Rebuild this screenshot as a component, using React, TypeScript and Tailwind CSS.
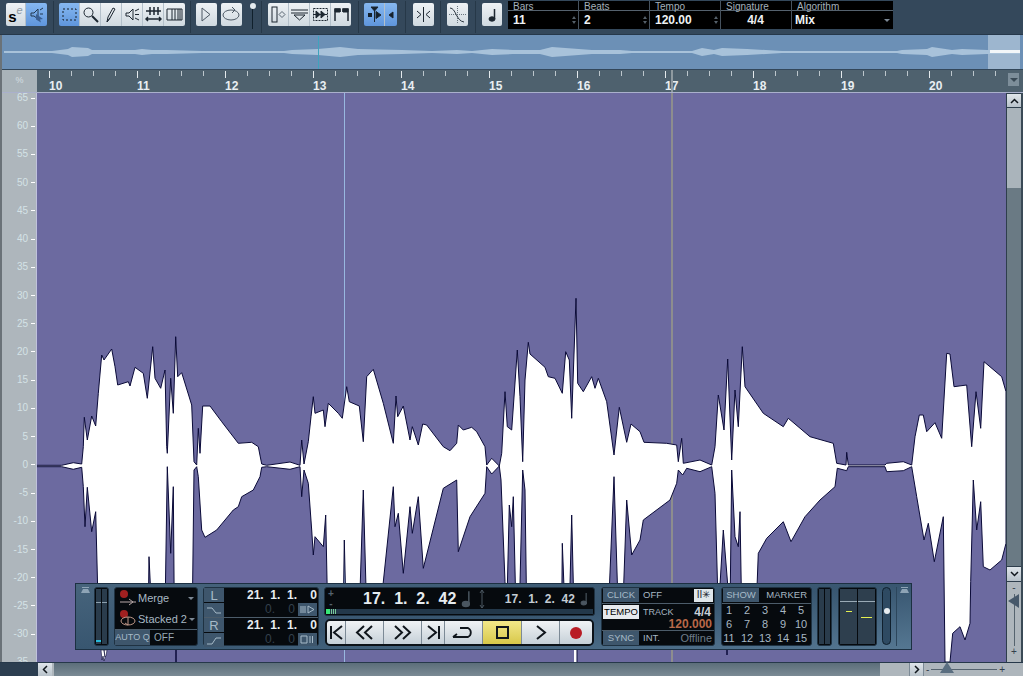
import type { ReactNode } from "react";

// ---- waveform outline, points read off the reference at 3x ----
type Pt = [number, number];
const fromLeft = (p: Pt[]) => p.map(([x, y]): Pt => [30 + x / 3, 280 + y / 3]);
const fromRight = (p: Pt[]) => p.map(([x, y]): Pt => [500 + x / 3, 280 + y / 3]);

const upper: Pt[] = [
  ...fromLeft([
    [20, 556], [95, 556], [130, 548], [155, 552], [160, 500], [163, 412], [172, 480], [185, 408], [197, 438], [205, 340],
    [215, 225], [222, 240], [245, 207], [255, 260], [263, 315], [295, 305], [300, 318], [315, 262], [340, 280], [352, 355],
    [368, 200], [375, 295], [392, 325], [405, 270], [410, 500], [412, 520], [422, 295], [430, 400], [437, 170], [443, 290],
    [455, 278], [485, 375], [492, 545], [500, 555], [505, 445], [510, 520], [518, 378], [540, 378], [575, 425], [625, 490],
    [665, 487], [685, 500], [695, 552], [710, 556], [780, 546], [810, 556], [815, 480], [822, 552], [835, 485], [843, 410],
    [850, 350], [855, 400], [880, 390], [885, 440], [895, 370], [925, 400], [937, 415], [950, 320], [958, 365], [988, 378],
    [1000, 485], [1010, 290], [1030, 268], [1060, 370], [1090, 490], [1098, 348], [1103, 410], [1120, 378], [1140, 480],
    [1147, 440], [1165, 495], [1178, 432], [1190, 435], [1240, 500], [1260, 512], [1280, 490], [1285, 435], [1300, 450],
    [1325, 442], [1340, 455], [1365, 500], [1370, 555], [1385, 535], [1408, 558], [1415, 520], [1425, 335], [1432, 440],
    [1445, 450], [1462, 210], [1470, 350], [1478, 545], [1485, 300], [1495, 187],
  ]),
  ...fromRight([
    [90, 222], [135, 262], [145, 290], [165, 295], [187, 340], [197, 215], [208, 240], [215, 415], [228, 55], [233, 310],
    [250, 335], [275, 290], [285, 325], [295, 295], [320, 365], [342, 525], [358, 382], [380, 487], [393, 432], [420, 455],
    [432, 487], [500, 490], [530, 495], [535, 545], [545, 475], [550, 550], [600, 540], [635, 555], [645, 500], [655, 345],
    [672, 450], [683, 237], [695, 540], [705, 330], [715, 440], [727, 200], [735, 320], [790, 400], [850, 440], [865, 415],
    [930, 470], [1000, 490], [1010, 550], [1038, 555], [1040, 517], [1045, 555], [1155, 555], [1160, 550], [1210, 545],
    [1235, 555], [1245, 470], [1258, 405], [1270, 405], [1280, 455], [1305, 428], [1325, 475], [1340, 220], [1350, 222],
    [1362, 320], [1400, 315], [1415, 500], [1428, 335], [1442, 445], [1452, 245], [1505, 290], [1518, 335],
  ]),
];

const lower: Pt[] = [
  ...fromLeft([
    [20, 560], [95, 560], [130, 568], [155, 562], [160, 620], [165, 740], [172, 622], [185, 755], [197, 695], [205, 1000],
    [355, 1000], [357, 830], [365, 1000], [405, 1000], [412, 560], [422, 820], [430, 620], [433, 1000], [487, 1000], [492, 570],
    [500, 560], [505, 590], [515, 750], [525, 772], [560, 750], [610, 690], [625, 680], [635, 650], [670, 630], [690, 590],
    [695, 562], [710, 560], [780, 568], [810, 560], [815, 650], [822, 570], [835, 610], [845, 750], [850, 825], [855, 770],
    [880, 800], [887, 705], [893, 1000], [940, 1000], [943, 780], [948, 1000], [988, 1000], [1000, 630], [1010, 1000], [1050, 1000],
    [1090, 620], [1095, 740], [1105, 700], [1120, 880], [1140, 680], [1147, 760], [1165, 650], [1180, 865], [1240, 625],
    [1280, 600], [1285, 815], [1320, 710], [1365, 640], [1370, 560], [1385, 582], [1408, 558],
  ]),
  ...fromRight([
    [3, 600], [15, 905], [20, 1000], [28, 675], [35, 740], [40, 650], [48, 1000], [58, 1000], [68, 570], [75, 630], [80, 1000],
    [185, 1000], [187, 790], [195, 1000], [208, 1000], [215, 705], [222, 1000], [325, 1000], [342, 590], [355, 1000], [368, 1000],
    [380, 660], [395, 825], [420, 780], [430, 720], [510, 660], [530, 610], [535, 570], [548, 585], [560, 565], [600, 575],
    [635, 560], [645, 640], [655, 1000], [670, 750], [690, 1000], [695, 570], [705, 770], [715, 800], [720, 695], [725, 1000],
    [768, 1000], [775, 820], [800, 775], [850, 725], [873, 785], [915, 710], [960, 660], [1005, 620], [1012, 565], [1040, 572],
    [1045, 560], [1155, 560], [1160, 575], [1210, 572], [1235, 560], [1250, 650], [1272, 780], [1285, 730], [1303, 845],
    [1330, 710], [1335, 1146], [1350, 1146], [1358, 1060], [1380, 1040], [1395, 1080], [1410, 1030], [1412, 905], [1420, 600],
    [1430, 750], [1442, 665], [1450, 860], [1470, 870], [1505, 840], [1518, 790],
  ]),
];

const wavePoints = [...upper, ...lower.slice().reverse()].map(([x, y]) => `${x.toFixed(1)},${y.toFixed(1)}`).join(" ");

// overview strip: x + half height of the band, mirrored about y=17
const overview: Pt[] = [
  [2, 1], [50, 1], [66, 3], [70, 5], [86, 4], [90, 2], [133, 2], [140, 3], [150, 2], [165, 2], [200, 1], [282, 1], [290, 2], [316, 3],
  [338, 5], [356, 3], [400, 2], [430, 1], [455, 2], [470, 1], [490, 3], [511, 2], [538, 2], [550, 5], [590, 2], [618, 2], [630, 1],
  [690, 1], [700, 4], [712, 2], [720, 4], [745, 3], [780, 1], [895, 1], [900, 2], [925, 3], [930, 5], [950, 2], [960, 3], [985, 2], [1018, 2],
];
const overviewPoints = [...overview.map(([x, h]) => `${x},${17 - h}`), ...overview.slice().reverse().map(([x, h]) => `${x},${17 + h}`)].join(" ");

const axisLabels = ["65", "60", "55", "50", "45", "40", "35", "30", "25", "20", "15", "10", "5", "0", "-5", "-10", "-15", "-20", "-25", "-30", "-35"];
const bars = [10, 11, 12, 13, 14, 15, 16, 17, 18, 19, 20];

// ---- toolbar ----
function Tool({ on, w = 21, children }: { on?: boolean; w?: number; children: ReactNode }) {
  return (
    <div
      style={{ width: w }}
      className={`h-[23px] flex items-center justify-center border-r border-[#b4c0ca] last:border-r-0 ${
        on ? "bg-gradient-to-b from-[#86b8f0] to-[#5f95dc]" : "bg-gradient-to-b from-[#eef2f5] to-[#d0d9e0]"
      }`}
    >
      {children}
    </div>
  );
}

function Ico({ children, w = 17, h = 17 }: { children: ReactNode; w?: number; h?: number }) {
  return (
    <svg width={w} height={h} viewBox={`0 0 ${w} ${h}`} fill="none" stroke="#1c2630" strokeWidth="1">
      {children}
    </svg>
  );
}

const Sep = ({ ml, mr }: { ml: string; mr: string }) => <div className={`${ml} ${mr} w-px h-[32px] mt-[1px] bg-[#263848]`} />;

function Spinner() {
  return (
    <div className="flex flex-col gap-[2px] items-center mr-[1px]">
      <div className="w-0 h-0 border-x-[2.5px] border-x-transparent border-b-[3px] border-b-[#55606a]" />
      <div className="w-0 h-0 border-x-[2.5px] border-x-transparent border-t-[3px] border-t-[#55606a]" />
    </div>
  );
}

function InfoCell({ label, value, w, spin, center }: { label: string; value: string; w: string; spin?: boolean; center?: boolean }) {
  return (
    <div className={`${w} flex flex-col border-r border-[#46525e] last:border-r-0`}>
      <div className="h-[10px] border-b border-[#55626e] pl-[5px] text-[10px] leading-[11px] text-[#a4b0ba]">{label}</div>
      <div className="flex-1 flex items-center justify-between pl-[5px] pr-[1px]">
        <span className={`text-[12px] font-bold text-[#eef2f4] ${center ? "w-full text-center pr-[5px]" : ""}`}>{value}</span>
        {spin && <Spinner />}
      </div>
    </div>
  );
}

function TopBar() {
  return (
    <div className="h-[35px] flex items-start bg-[#34485b] border-b border-[#26384a] pl-[6px]">
      <div className="flex mt-[3px] rounded-[2px] overflow-hidden">
        <Tool w={20}>
          <span className="text-[15px] font-bold text-black leading-none mt-[3px]">s</span>
          <span className="text-[11px] italic text-[#8d9aa6] leading-none -mt-[9px]">e</span>
        </Tool>
        <Tool on>
          <Ico>
            <path d="M3 7h3l4-4v9M3 7v3h3l4 3M12 4l3-2M12 8h3" stroke="#22384f" />
            <path d="M8 8l7 5-3 .5 1 3-5-3z" fill="#3a5f92" stroke="none" />
          </Ico>
        </Tool>
      </div>
      <Sep ml="ml-[6px]" mr="mr-[5px]" />
      <div className="flex mt-[3px] rounded-[2px] overflow-hidden">
        <Tool on>
          <Ico><rect x="2" y="3" width="13" height="11" strokeDasharray="2 2" stroke="#16202a" /></Ico>
        </Tool>
        <Tool>
          <Ico>
            <circle cx="6.5" cy="6.5" r="4.5" />
            <path d="M10 10l6 6" strokeWidth="2" />
          </Ico>
        </Tool>
        <Tool>
          <Ico><path d="M4 16l1-5 5-9 2 1-5 9zM4 16l3-4" /></Ico>
        </Tool>
        <Tool>
          <Ico><path d="M2 7h3l4-4v11l-4-4H2zM11 5l4-2M11 8.500h4M11 12l4 2" /></Ico>
        </Tool>
        <Tool>
          <Ico>
            <path d="M5 1v8M9 1v8M13 1v8M1 5h15" strokeWidth="1.500" />
            <path d="M1 13h15M3 11l-2 2 2 2M14 11l2 2-2 2" strokeWidth="1.500" />
          </Ico>
        </Tool>
        <Tool>
          <Ico><path d="M1 3h15v11H1zM6 3v11M9 3v11M12 3v11M14 3v11" /></Ico>
        </Tool>
      </div>
      <Sep ml="ml-[5px]" mr="mr-[5px]" />
      <div className="mt-[3px] rounded-[2px] overflow-hidden flex">
        <Tool>
          <Ico><path d="M4 2l8 6.500-8 6.500z" stroke="#4c5864" /></Ico>
        </Tool>
      </div>
      <div className="mt-[3px] ml-[4px] rounded-[2px] overflow-hidden flex">
        <Tool>
          <Ico w={19}>
            <ellipse cx="9" cy="9" rx="8" ry="5" stroke="#4c5864" />
            <path d="M10 1l3 3-3 3" stroke="#4c5864" />
          </Ico>
        </Tool>
      </div>
      <div className="ml-[6px] mt-[3px] w-[9px] flex flex-col items-center">
        <div className="w-[6px] h-[6px] rounded-full bg-[#e6ecf0]" />
        <div className="w-px h-[20px] bg-[#10202c]" />
      </div>
      <Sep ml="ml-[4px]" mr="mr-[6px]" />
      <div className="flex mt-[3px] rounded-[2px] overflow-hidden">
        <Tool>
          <Ico>
            <rect x="2" y="1" width="5" height="15" />
            <path d="M9 8.500l3-3 3 3-3 3z" stroke="#5a6672" />
          </Ico>
        </Tool>
        <Tool>
          <Ico w={19}>
            <path d="M1 4h17M1 7h17" />
            <path d="M4 9h11l-5.500 5z" />
          </Ico>
        </Tool>
        <Tool>
          <Ico>
            <rect x="1.500" y="2.500" width="14" height="12" strokeDasharray="2 1" />
            <path d="M4 5v7l4-3.500zM9 5v7l4-3.500zM2 8.500h13" fill="#1c2630" />
          </Ico>
        </Tool>
        <Tool w={20}>
          <Ico><path d="M2 15V3h5v3M15 15V3h-5v3" strokeWidth="1.500" /><path d="M2 3h5v3H2zM10 3h5v3h-5z" fill="#1c2630" /></Ico>
        </Tool>
      </div>
      <Sep ml="ml-[7px]" mr="mr-[5px]" />
      <div className="flex mt-[3px] rounded-[2px] overflow-hidden">
        <Tool on>
          <Ico>
            <path d="M5 1h7L8.500 5zM8.500 4v12" fill="#14202c" />
            <rect x="2" y="7" width="4" height="4" fill="#14202c" stroke="none" />
            <path d="M10 5.500l5 3.500-5 3.500z" fill="#14202c" />
          </Ico>
        </Tool>
        <Tool on w={12}>
          <Ico w={8}><path d="M6 6v6L2 9z" fill="#14202c" /></Ico>
        </Tool>
      </div>
      <Sep ml="ml-[8px]" mr="mr-[7px]" />
      <div className="flex mt-[3px] rounded-[2px] overflow-hidden">
        <Tool>
          <Ico><path d="M8.500 1v15M2 5l4 3.500L2 12M15 5l-4 3.500 4 3.500" /></Ico>
        </Tool>
      </div>
      <Sep ml="ml-[6px]" mr="mr-[6px]" />
      <div className="flex mt-[3px] rounded-[2px] overflow-hidden">
        <Tool>
          <Ico w={19} h={19}>
            <path d="M1 9.500h17" strokeDasharray="1 1" stroke="#68747e" />
            <path d="M9.500 1v17" strokeDasharray="1 1" stroke="#68747e" />
            <path d="M2 3c6 0 6 13 14 14" stroke="#2a343e" />
          </Ico>
        </Tool>
      </div>
      <Sep ml="ml-[7px]" mr="mr-[6px]" />
      <div className="flex mt-[3px] rounded-[2px] overflow-hidden">
        <Tool w={20}>
          <Ico>
            <path d="M10.500 3v10" strokeWidth="1.500" />
            <ellipse cx="8" cy="13" rx="3" ry="2.200" fill="#1c2630" />
          </Ico>
        </Tool>
      </div>
      <div className="ml-[6px] mt-[1px] w-[385px] h-[28px] bg-black flex font-['Liberation_Sans',sans-serif]">
        <InfoCell label="Bars" value="11" w="w-[71px]" spin />
        <InfoCell label="Beats" value="2" w="w-[71px]" spin />
        <InfoCell label="Tempo" value="120.00" w="w-[71px]" spin />
        <InfoCell label="Signature" value="4/4" w="w-[71px]" center />
        <div className="flex-1 flex flex-col">
          <div className="h-[10px] border-b border-[#55626e] pl-[5px] text-[10px] leading-[11px] text-[#a4b0ba]">Algorithm</div>
          <div className="flex-1 flex items-center justify-between pl-[3px] pr-[3px]">
            <span className="text-[12px] font-bold text-[#eef2f4]">Mix</span>
            <div className="w-0 h-0 border-x-[3px] border-x-transparent border-t-[3px] border-t-[#7c8894]" />
          </div>
        </div>
      </div>
    </div>
  );
}

function Overview() {
  return (
    <div className="relative ml-[2px] h-[35px] bg-[#6c90b6] border-b border-[#33475a]">
      <div className="absolute right-[3px] top-0 bottom-0 w-[32px] bg-[#9db6cf]" />
      <svg className="absolute inset-0" width="1021" height="35" viewBox="0 0 1021 35">
        <polygon points={overviewPoints} fill="#a8c2da" />
        <path d="M988 15h30v3h-30z" fill="#f2f6f9" />
        <path d="M316.500 1v33" stroke="#3fa3bd" />
      </svg>
    </div>
  );
}

function Ruler() {
  return (
    <div className="relative h-[23px] flex font-['Liberation_Sans',sans-serif] bg-[#4e616e] ml-[2px] overflow-hidden border-b border-[#aab0cc]">
      <div className="w-[35px] shrink-0 bg-[#a9b3b9] flex items-center justify-center text-[9px] text-[#d4dee2]">%</div>
      <div className="flex pl-[12px]">
        {bars.map((b) => (
          <div key={b} className="w-[88px] shrink-0 flex flex-col">
            <div className="flex h-[9px] mt-[1px] items-start">
              <div className="w-[22px] h-[7px] border-l border-[#e4e9ec]" />
              <div className="w-[22px] h-[5px] border-l border-[#bcc6cc]" />
              <div className="w-[22px] h-[5px] border-l border-[#bcc6cc]" />
              <div className="w-[22px] h-[5px] border-l border-[#bcc6cc]" />
            </div>
            <div className="text-[12px] leading-[12px] font-bold text-[#e8eef2]">{b}</div>
          </div>
        ))}
      </div>
      <div className="absolute left-[669px] top-0 bottom-0 w-[2px] bg-[#8f9aa0]" />
      <div className="absolute right-[4px] top-[3px] w-[11px] h-[13px] bg-[#7d8e9a] flex items-center justify-center">
        <div className="w-0 h-0 border-x-[4px] border-x-transparent border-t-[4px] border-t-[#3a4a56]" />
      </div>
    </div>
  );
}

function Axis() {
  return (
    <div className="w-[35px] ml-[2px] shrink-0 bg-[#aeb6bc] border-r border-[#c0c2dc] overflow-hidden flex flex-col gap-[18.23px] font-['Liberation_Sans',sans-serif]">
      {axisLabels.map((l) => (
        <div key={l} className="h-[10px] shrink-0 flex items-center justify-end text-[10px] leading-[10px] text-[#d4e2e6]">
          <span>{l}</span>
          <div className="w-[4px] h-px bg-white ml-[3px] mr-[1px]" />
        </div>
      ))}
    </div>
  );
}

// ---- transport panel ----
const panelBlock = "bg-[#060a0e] rounded-[3px] border border-[#1f3242]";

function MiniCurve({ d }: { d: string }) {
  return (
    <div className="w-[20px] h-[14px] bg-[#3e566c] flex items-center justify-center">
      <svg width="16" height="11" viewBox="0 0 16 11" fill="none" stroke="#a6bac8" strokeWidth="1">
        <path d={d} />
      </svg>
    </div>
  );
}

function LocatorRow({ letter, curve, icon }: { letter: string; curve: string; icon: ReactNode }) {
  return (
    <div className="flex h-[29px]">
      <div className="flex flex-col gap-[1px]">
        <div className="w-[20px] h-[14px] bg-[#3e566c] flex items-center justify-center text-[13px] leading-none text-[#a6bac8]">{letter}</div>
        <MiniCurve d={curve} />
      </div>
      <div className="flex-1 flex flex-col items-end pr-[1px]">
        <div className="text-[12px] leading-[14px] font-bold text-[#e6ecf0] whitespace-pre">21.  1.  1.    0</div>
        <div className="flex items-center gap-[1px]">
          <div className="text-[12px] leading-[14px] text-[#33404c] whitespace-pre">0.    0</div>
          <div className="w-[19px] h-[13px] ml-[2px] bg-[#3e566c] flex items-center justify-center">{icon}</div>
        </div>
      </div>
    </div>
  );
}

function Note({ s = 14 }: { s?: number }) {
  return (
    <svg width={s * 0.7} height={s * 1.3} viewBox="0 0 10 18" fill="none" stroke="#4a5660" strokeWidth="1.500">
      <path d="M8 1v13" />
      <ellipse cx="5" cy="14" rx="3.500" ry="2.500" fill="#4a5660" />
    </svg>
  );
}

function Transport({ w, on, children }: { w: number; on?: boolean; children: ReactNode }) {
  return (
    <div
      style={{ width: w }}
      className={`h-full flex items-center justify-center border-r border-[#7c8a96] last:border-r-0 ${
        on ? "bg-gradient-to-b from-[#f2e888] to-[#d8c848]" : "bg-gradient-to-b from-[#f0f3f5] to-[#c6d0d8]"
      }`}
    >
      {children}
    </div>
  );
}

function TransportPanel() {
  return (
    <div className="absolute left-[38px] top-[490px] w-[837px] h-[67px] flex border border-[#1c3042] bg-gradient-to-br from-[#47647c] via-[#385670] to-[#557792] font-['Liberation_Sans',sans-serif]">
      <div className="w-[18px] flex flex-col items-center pt-[3px]">
        <svg width="9" height="7" viewBox="0 0 9 7" fill="#8ea4b6"><path d="M1 0h7v1H1zM2 2h5l2 4H0z" /></svg>
      </div>
      {/* output meter */}
      <div className={`${panelBlock} w-[15px] h-[59px] mt-[3px] flex gap-[1px] px-[1px] py-[1px]`}>
        <div className="flex-1 bg-[#2a3c4c] flex flex-col justify-end relative">
          <div className="absolute left-0 right-0 top-[13px] h-px bg-[#8da0ae]" />
          <div className="h-[2px] bg-[#28b8d8] mb-[2px]" />
        </div>
        <div className="flex-1 bg-[#2a3c4c] relative">
          <div className="absolute left-0 right-0 top-[13px] h-px bg-[#8da0ae]" />
        </div>
      </div>
      {/* record mode */}
      <div className={`${panelBlock} ml-[5px] w-[84px] h-[59px] mt-[3px] flex flex-col`}>
        <div className="h-[21px] flex items-center pl-[2px]">
          <svg width="22" height="20" viewBox="0 0 22 20" fill="none">
            <circle cx="7" cy="5" r="4" fill="#a02020" />
            <path d="M3 13h16M12 10l4 3-4 3" stroke="#b8a8a8" />
          </svg>
          <span className="-ml-[1px] text-[11px] text-[#a8b8c4]">Merge</span>
          <div className="ml-auto mr-[3px] w-0 h-0 border-x-[3px] border-x-transparent border-t-[3px] border-t-[#7c8894]" />
        </div>
        <div className="h-[20px] flex items-center pl-[2px]">
          <svg width="22" height="20" viewBox="0 0 22 20" fill="none">
            <circle cx="7" cy="5" r="4" fill="#a02020" />
            <ellipse cx="11" cy="12" rx="7" ry="4" stroke="#c09888" />
            <path d="M11 8v8M8 14l3 2" stroke="#c09888" />
          </svg>
          <span className="-ml-[1px] text-[11px] text-[#a8b8c4] whitespace-nowrap">Stacked 2</span>
          <div className="ml-auto mr-[2px] w-0 h-0 border-x-[3px] border-x-transparent border-t-[3px] border-t-[#7c8894]" />
        </div>
        <div className="h-px bg-[#4c5c6a]" />
        <div className="flex-1 flex items-center">
          <div className="w-[35px] h-full bg-[#3e566c] flex items-center justify-center whitespace-nowrap text-[9px] text-[#a6bac8]">AUTO Q</div>
          <span className="ml-[4px] text-[10px] text-[#98a8b4]">OFF</span>
        </div>
      </div>
      {/* locators */}
      <div className={`${panelBlock} ml-[5px] w-[116px] h-[59px] mt-[3px]`}>
        <LocatorRow
          letter="L"
          curve="M1 3h5l4 5h5"
          icon={<svg width="15" height="9" viewBox="0 0 15 9" fill="none" stroke="#a6bac8"><path d="M1 1v7M3 1v7M5 1v7M8 1l6 3.500L8 8z" /></svg>}
        />
        <div className="h-px bg-[#4c5c6a]" />
        <LocatorRow
          letter="R"
          curve="M1 9h5l4-6h5"
          icon={<svg width="15" height="9" viewBox="0 0 15 9" fill="none" stroke="#a6bac8"><path d="M1 1h6v7H1zM10 1v7M12.500 1v7" /></svg>}
        />
      </div>
      {/* time display + transport */}
      <div className="ml-[5px] w-[271px] h-[59px] mt-[3px] flex flex-col gap-[3px]">
        <div className={`${panelBlock} h-[30px] flex flex-col`}>
          <div className="flex-1 flex items-center pl-[1px]">
            <div className="w-[10px] flex flex-col items-center text-[#55636e] text-[10px] leading-[10px] font-bold">
              <span>+</span>
              <span>-</span>
            </div>
            <span className="ml-[27px] w-[97px] text-[16px] font-bold text-[#e6ecf0] whitespace-pre leading-none">17.  1.  2.  42</span>
            <div className="ml-[1px]"><Note s={14} /></div>
            <svg className="ml-[8px]" width="6" height="20" viewBox="0 0 6 20" fill="none" stroke="#4a5660"><path d="M3 1v18M1 4l2-3 2 3M1 16l2 3 2-3" /></svg>
            <span className="ml-[20px] w-[75px] text-[12px] font-bold text-[#c4ccd4] whitespace-pre leading-none">17.  1.  2.  42</span>
            <Note s={11} />
          </div>
          <div className="h-[5px] mx-[1px] mb-[1px] bg-[#23384a] flex gap-[1px]">
            <div className="w-[4px] bg-[#38e878]" />
            <div className="w-[1px] bg-[#78c898]" />
            <div className="w-[1px] bg-[#78c898]" />
            <div className="w-[1px] bg-[#78c898]" />
          </div>
        </div>
        <div className="h-[27px] ml-[1px] w-[269px] flex border-2 border-[#0c1218] rounded-[5px] overflow-hidden">
          <Transport w={19}>
            <svg width="15" height="15" viewBox="0 0 15 15" fill="none" stroke="#10161c" strokeWidth="2"><path d="M2 1v13M13 1L5 7.500 13 14" /></svg>
          </Transport>
          <Transport w={38}>
            <svg width="19" height="15" viewBox="0 0 19 15" fill="none" stroke="#10161c" strokeWidth="2"><path d="M9 1L2 7.500 9 14M17 1l-7 6.500 7 6.500" /></svg>
          </Transport>
          <Transport w={38}>
            <svg width="19" height="15" viewBox="0 0 19 15" fill="none" stroke="#10161c" strokeWidth="2"><path d="M2 1l7 6.500L2 14M10 1l7 6.500L10 14" /></svg>
          </Transport>
          <Transport w={23}>
            <svg width="15" height="15" viewBox="0 0 15 15" fill="none" stroke="#10161c" strokeWidth="2"><path d="M13 1v13M2 1l8 6.500L2 14" /></svg>
          </Transport>
          <Transport w={38}>
            <svg width="23" height="13" viewBox="0 0 23 13" fill="none" stroke="#10161c" strokeWidth="1.800"><path d="M1 11h15a5 5 0 0 0 0-9H8M5 8l-4 3" /></svg>
          </Transport>
          <Transport w={39} on>
            <div className="w-[13px] h-[13px] border-2 border-[#10161c]" />
          </Transport>
          <Transport w={38}>
            <svg width="12" height="15" viewBox="0 0 12 15" fill="none" stroke="#10161c" strokeWidth="2"><path d="M2 1l8 6.500L2 14" /></svg>
          </Transport>
          <Transport w={32}>
            <div className="w-[12px] h-[12px] rounded-full bg-[#b81c24]" />
          </Transport>
        </div>
      </div>
      {/* click / tempo / sync */}
      <div className={`${panelBlock} ml-[6px] w-[114px] h-[59px] mt-[3px] flex flex-col text-[9.5px] leading-none`}>
        <div className="h-[14px] flex items-center">
          <div className="w-[36px] h-full ml-[1px] bg-[#3e566c] flex items-center justify-center text-[#a6bac8]">CLICK</div>
          <span className="ml-[4px] text-[#a8b8c4]">OFF</span>
          <div className="ml-auto mr-[1px] h-[13px] w-[19px] bg-[#dfe6ea] flex items-center justify-center text-[10px] text-[#1c2630]">II✳</div>
        </div>
        <div className="h-px bg-[#4c5c6a] mt-[1px]" />
        <div className="flex-1 flex flex-col pt-[1px]">
          <div className="flex items-center h-[14px]">
            <div className="w-[36px] h-full ml-[1px] bg-[#e6eaee] flex items-center justify-center text-black">TEMPO</div>
            <span className="ml-[4px] text-[9px] text-[#a8b8c4]">TRACK</span>
            <span className="ml-auto mr-[3px] text-[12px] font-bold text-[#c6d0d8]">4/4</span>
          </div>
          <div className="self-end mr-[2px] -mt-[1px] text-[12px] font-bold text-[#b86848]">120.000</div>
        </div>
        <div className="h-px bg-[#4c5c6a]" />
        <div className="h-[14px] flex items-center">
          <div className="w-[36px] h-full ml-[1px] bg-[#3e566c] flex items-center justify-center text-[#a6bac8]">SYNC</div>
          <span className="ml-[4px] text-[#a8b8c4]">INT.</span>
          <span className="ml-auto mr-[2px] text-[11px] text-[#6e7c88]">Offline</span>
        </div>
      </div>
      {/* markers */}
      <div className={`${panelBlock} ml-[6px] w-[91px] h-[59px] mt-[3px] flex flex-col`}>
        <div className="h-[14px] flex items-center text-[9.5px] leading-none">
          <div className="w-[36px] h-full ml-[1px] bg-[#3e566c] flex items-center justify-center text-[#a6bac8]">SHOW</div>
          <span className="ml-auto mr-[4px] text-[#a8b8c4]">MARKER</span>
        </div>
        <div className="h-px bg-[#4c5c6a] mt-[1px]" />
        <div className="flex-1 grid grid-cols-[repeat(5,18px)] -ml-[2px] items-center justify-items-center text-[11px] leading-none text-[#a8b8c4]">
          {Array.from({ length: 15 }, (_, i) => (
            <span key={i}>{i + 1}</span>
          ))}
        </div>
      </div>
      {/* master meters */}
      <div className={`${panelBlock} ml-[5px] w-[15px] h-[59px] mt-[3px] flex gap-[1px] p-[1px]`}>
        <div className="flex-1 bg-[#2a3c4c]" />
        <div className="flex-1 bg-[#2a3c4c]" />
      </div>
      <div className={`${panelBlock} ml-[6px] w-[39px] h-[59px] mt-[3px] flex gap-[1px] p-[1px]`}>
        {[9, 15].map((t, i) => (
          <div key={t} className="flex-1 flex flex-col">
            <div className="h-[13px] bg-[#2e3f4e] border-b border-[#9aaab6]" />
            <div className="flex-1 bg-[#2e3f4e] flex justify-center">
              <div style={{ marginTop: t }} className={`h-px bg-[#e4f050] ${i === 0 ? "w-[6px]" : "w-[11px]"}`} />
            </div>
          </div>
        ))}
      </div>
      <div className="ml-[5px] w-[9px] h-[58px] mt-[3px] rounded-full border border-[#10202e] bg-[#2e4a62] flex justify-center pt-[20px]">
        <div className="w-[6px] h-[6px] rounded-full bg-[#e6ecf0]" />
      </div>
      <div className="ml-[5px] w-px h-[59px] mt-[3px] bg-[#2c465c]" />
      <div className="flex-1 flex justify-center pt-[3px]">
        <svg width="9" height="7" viewBox="0 0 9 7" fill="#8ea4b6"><path d="M1 0h7v1H1zM2 2h5l2 4H0z" /></svg>
      </div>
    </div>
  );
}

function Canvas() {
  return (
    <div className="relative flex-1 bg-[#6c6aa0] overflow-hidden">
      <svg className="absolute inset-0" width="969" height="569" viewBox="37 93 969 569">
        <path d="M344.500 93v569" stroke="#98b8e0" />
        <path d="M672 93v569" stroke="#989a88" strokeWidth="1.500" />
        <polygon points={wavePoints} fill="#ffffff" stroke="#0a0a38" strokeWidth="1" strokeLinejoin="miter" />
        <path d="M101 650h3l1 8-1 3-1-5-1 4zM104 650h3l-1 6-1 1z" fill="#fff" stroke="#0a0a38" strokeWidth=".6" />
        <path d="M176 650v12" stroke="#0a0a38" strokeWidth="1.500" />
        <path d="M574 650h3v12h-3z" fill="#fff" />
        <path d="M577 650v12" stroke="#0a0a38" />
        <path d="M727 650v5" stroke="#0a0a38" strokeWidth="1.500" />
      </svg>
      <TransportPanel />
    </div>
  );
}

function VScroll() {
  return (
    <div className="w-[17px] shrink-0 flex flex-col bg-[#3a4a56]">
      <div className="w-[15px] flex-1 flex flex-col border-l border-[#2e3e4c]">
        <div className="h-[15px] bg-gradient-to-b from-[#dfe5ea] to-[#b8c2ca] border-y border-[#2e3e4c] flex items-center justify-center">
          <svg width="9" height="6" viewBox="0 0 9 6" fill="none" stroke="#10161c" strokeWidth="1.500"><path d="M1 5l3.500-3.500L8 5" /></svg>
        </div>
        <div className="h-[80px] bg-[#aab4bb]" />
        <div className="h-[378px] bg-[#6a7a84]" />
        <div className="h-[16px] bg-gradient-to-b from-[#dfe5ea] to-[#b8c2ca] border-y border-[#2e3e4c] flex items-center justify-center">
          <svg width="9" height="6" viewBox="0 0 9 6" fill="none" stroke="#10161c" strokeWidth="1.500"><path d="M1 1l3.500 3.500L8 1" /></svg>
        </div>
        <div className="flex-1 bg-[#aeb6bc] flex flex-col items-center relative">
          <span className="text-[10px] leading-[12px] text-[#33404c]">-</span>
          <div className="flex-1 w-px bg-[#55636e]" />
          <span className="text-[10px] leading-[12px] text-[#33404c] mb-[4px]">+</span>
          <div className="absolute top-[12px] left-[1px] w-0 h-0 border-y-[7px] border-y-transparent border-r-[11px] border-r-[#46586a]" />
        </div>
      </div>
    </div>
  );
}

function HScroll() {
  return (
    <div className="h-[14px] flex bg-[#aeb6bc] border-t border-[#26384a]">
      <div className="w-[38px] bg-[#2c3e50]" />
      <div className="w-[14px] bg-gradient-to-b from-[#dfe5ea] to-[#b8c2ca] flex items-center justify-center">
        <svg width="6" height="9" viewBox="0 0 6 9" fill="none" stroke="#10161c" strokeWidth="1.500"><path d="M5 1L1.500 4.500 5 8" /></svg>
      </div>
      <div className="w-[826px] ml-[2px] bg-gradient-to-b from-[#5c6e7a] to-[#7a8a94]" />
      <div className="flex-1 relative flex items-center">
        <div className="absolute left-[29px] w-[15px] h-[13px] bg-gradient-to-b from-[#dfe5ea] to-[#b8c2ca] border-x border-[#7c8a96] flex items-center justify-center">
          <svg width="6" height="9" viewBox="0 0 6 9" fill="none" stroke="#10161c" strokeWidth="1.500"><path d="M1 1l3.500 3.500L1 8" /></svg>
        </div>
        <div className="absolute left-[46px] w-[79px] flex items-center text-[10px] leading-none text-[#33404c]">
          <span>-</span>
          <div className="flex-1 h-px mx-[2px] bg-[#55636e] relative">
            <div className="absolute left-[9px] -top-[7px] w-0 h-0 border-x-[7px] border-x-transparent border-b-[11px] border-b-[#5a6e80]" />
          </div>
          <span>+</span>
        </div>
      </div>
    </div>
  );
}

export default function App() {
  return (
    <div className="w-[1023px] h-[676px] overflow-hidden flex flex-col bg-[#6a7278] font-['Liberation_Sans',sans-serif]">
      <TopBar />
      <Overview />
      <Ruler />
      <div className="flex h-[569px]">
        <Axis />
        <Canvas />
        <VScroll />
      </div>
      <HScroll />
    </div>
  );
}
